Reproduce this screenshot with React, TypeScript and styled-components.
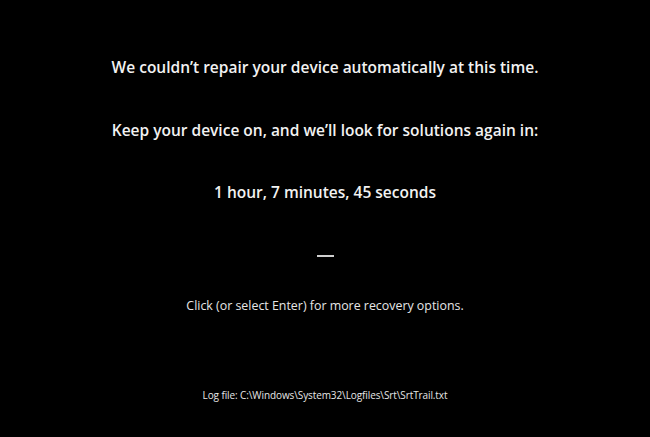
import React from "react";
import styled, { createGlobalStyle } from "styled-components";

const GlobalStyle = createGlobalStyle`
  html, body {
    margin: 0;
    padding: 0;
    background: #000;
  }
  body {
    font-family: "Open Sans", "Noto Sans", "Liberation Sans", sans-serif;
  }
`;

const Screen = styled.div`
  width: 650px;
  height: 437px;
  background: #000;
  color: #f2f2f2;
  display: flex;
  flex-direction: column;
  align-items: center;
  padding-top: 57px;
  box-sizing: border-box;
`;

const Message = styled.div`
  font-size: 15.5px;
  font-weight: 600;
  line-height: 20px;
  height: 20px;
  margin-bottom: 42.5px;
  white-space: nowrap;
`;

const Divider = styled.div`
  width: 17px;
  height: 2px;
  background: #cfcfcf;
  margin-top: 10px;
  margin-bottom: 40px;
`;

const Hint = styled.div`
  font-size: 12.4px;
  font-weight: 400;
  line-height: 18px;
  color: #e6e6e6;
  white-space: nowrap;
`;

const Footer = styled.div`
  margin-top: auto;
  margin-bottom: 35px;
  font-size: 10px;
  line-height: 14px;
  color: #e6e6e6;
  letter-spacing: -0.1px;
  white-space: nowrap;
`;

export default function App() {
  return (
    <>
      <GlobalStyle />
      <Screen>
        <Message>We couldn’t repair your device automatically at this time.</Message>
        <Message>Keep your device on, and we’ll look for solutions again in:</Message>
        <Message>1 hour, 7 minutes, 45 seconds</Message>
        <Divider />
        <Hint>Click (or select Enter) for more recovery options.</Hint>
        <Footer>Log file: C:\Windows\System32\Logfiles\Srt\SrtTrail.txt</Footer>
      </Screen>
    </>
  );
}
